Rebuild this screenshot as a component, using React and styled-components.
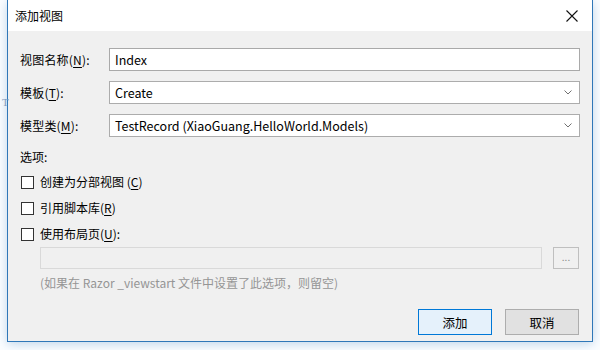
import React from "react";
import styled, { createGlobalStyle } from "styled-components";

const Global = createGlobalStyle`
  html, body { margin: 0; padding: 0; background: #fbfdff; }
  body { width: 600px; height: 350px; overflow: hidden; position: relative;
    font-family: "Noto Sans CJK SC", "Noto Sans", sans-serif; font-size: 12px; color: #000; }
  * { box-sizing: border-box; }
`;

const Window = styled.div`
  margin-left: 7px;
  width: 586px;
  height: 342px;
  display: flex;
  flex-direction: column;
  border: 1px solid #2f77b8;
  border-top: none;
  background: #f0f0f0;
  box-shadow: 0 2px 10px rgba(40, 110, 180, 0.28);
`;

const TitleBar = styled.div`
  height: 31px;
  flex: none;
  background: #fff;
  display: flex;
  align-items: center;
  justify-content: space-between;
  padding: 0 8px 0 7px;
`;

const Title = styled.span`
  font-size: 12px;
  line-height: 16px;
  color: #000;
`;

const CloseBtn = styled.div`
  width: 24px;
  height: 24px;
  display: flex;
  align-items: center;
  justify-content: center;
`;

const Body = styled.div`
  flex: 1;
  display: flex;
  flex-direction: column;
  padding: 17px 12px 0 12px;
`;

const FormGrid = styled.div`
  display: grid;
  grid-template-columns: 89px 1fr;
  grid-auto-rows: 23px;
  row-gap: 10px;
  align-items: center;
`;

const Label = styled.span`
  line-height: 16px;
  white-space: nowrap;
  letter-spacing: 0.2px;
`;

const U = styled.span`
  text-decoration: underline;
  text-underline-offset: 2px;
`;

const Field = styled.div`
  height: 23px;
  background: #fff;
  border: 1px solid ${(p) => (p.$combo ? "#acacac" : "#a9a9a9")};
  display: flex;
  align-items: center;
  justify-content: space-between;
  padding: 0 7px 0 5px;
  font-size: 12.5px;
  white-space: nowrap;
`;

const SectionLabel = styled.div`
  margin-top: 12px;
  margin-bottom: 4px;
  line-height: 16px;
`;

const CheckRow = styled.label`
  height: 26px;
  display: flex;
  align-items: center;
  gap: 6px;
  padding-left: 1px;
  line-height: 16px;
`;

const Box = styled.span`
  width: 13px;
  height: 13px;
  background: #fff;
  border: 1px solid #333;
  flex: none;
`;

const PathRow = styled.div`
  display: flex;
  align-items: center;
  gap: 11px;
  padding-left: 20px;
  height: 22px;
`;

const PathInput = styled.div`
  flex: 1;
  height: 22px;
  background: #f0f0f0;
  border: 1px solid #d9d9d9;
`;

const BrowseBtn = styled.div`
  width: 26px;
  height: 22px;
  border: 1px solid #bfbfbf;
  background: #f0f0f0;
  display: flex;
  align-items: center;
  justify-content: center;
  color: #8a8a8a;
  font-size: 10px;
  line-height: 10px;
  padding-bottom: 2px;
  margin-right: 1px;
`;

const Hint = styled.div`
  margin-top: 6px;
  padding-left: 20px;
  color: #959595;
  line-height: 16px;
  white-space: nowrap;
`;

const Footer = styled.div`
  margin-top: 18px;
  display: flex;
  justify-content: flex-end;
  gap: 13px;
  padding-right: 1px;
`;

const Button = styled.div`
  width: 74px;
  height: 26px;
  display: flex;
  align-items: center;
  justify-content: center;
  background: ${(p) => (p.$primary ? "#e5f1fb" : "#e1e1e1")};
  border: 1px solid ${(p) => (p.$primary ? "#0078d7" : "#adadad")};
  font-size: 12.5px;
`;

const Cursor = styled.span`
  position: absolute;
  left: 2px;
  top: 96px;
  font-family: "Liberation Serif", serif;
  font-size: 11px;
  color: #7d9cc0;
`;

const Chevron = () => (
  <svg width="8" height="5" viewBox="0 0 8 5">
    <path d="M0.5 0.5 L4 4 L7.5 0.5" fill="none" stroke="#707070" strokeWidth="1" />
  </svg>
);

const CloseIcon = () => (
  <svg width="12" height="12" viewBox="0 0 12 12">
    <path d="M0.5 0.5 L11.5 11.5 M11.5 0.5 L0.5 11.5" stroke="#111" strokeWidth="1.1" />
  </svg>
);

export default function App() {
  return (
    <>
      <Global />
      <Cursor>T</Cursor>
      <Window>
        <TitleBar>
          <Title>添加视图</Title>
          <CloseBtn>
            <CloseIcon />
          </CloseBtn>
        </TitleBar>
        <Body>
          <FormGrid>
            <Label>
              视图名称(<U>N</U>):
            </Label>
            <Field>Index</Field>
            <Label>
              模板(<U>T</U>):
            </Label>
            <Field $combo>
              Create
              <Chevron />
            </Field>
            <Label>
              模型类(<U>M</U>):
            </Label>
            <Field $combo>
              TestRecord (XiaoGuang.HelloWorld.Models)
              <Chevron />
            </Field>
          </FormGrid>
          <SectionLabel>选项:</SectionLabel>
          <CheckRow>
            <Box />
            <span>
              创建为分部视图 (<U>C</U>)
            </span>
          </CheckRow>
          <CheckRow>
            <Box />
            <span>
              引用脚本库(<U>R</U>)
            </span>
          </CheckRow>
          <CheckRow>
            <Box />
            <span>
              使用布局页(<U>U</U>):
            </span>
          </CheckRow>
          <PathRow>
            <PathInput />
            <BrowseBtn>...</BrowseBtn>
          </PathRow>
          <Hint>(如果在 Razor _viewstart 文件中设置了此选项，则留空)</Hint>
          <Footer>
            <Button $primary>添加</Button>
            <Button>取消</Button>
          </Footer>
        </Body>
      </Window>
    </>
  );
}
